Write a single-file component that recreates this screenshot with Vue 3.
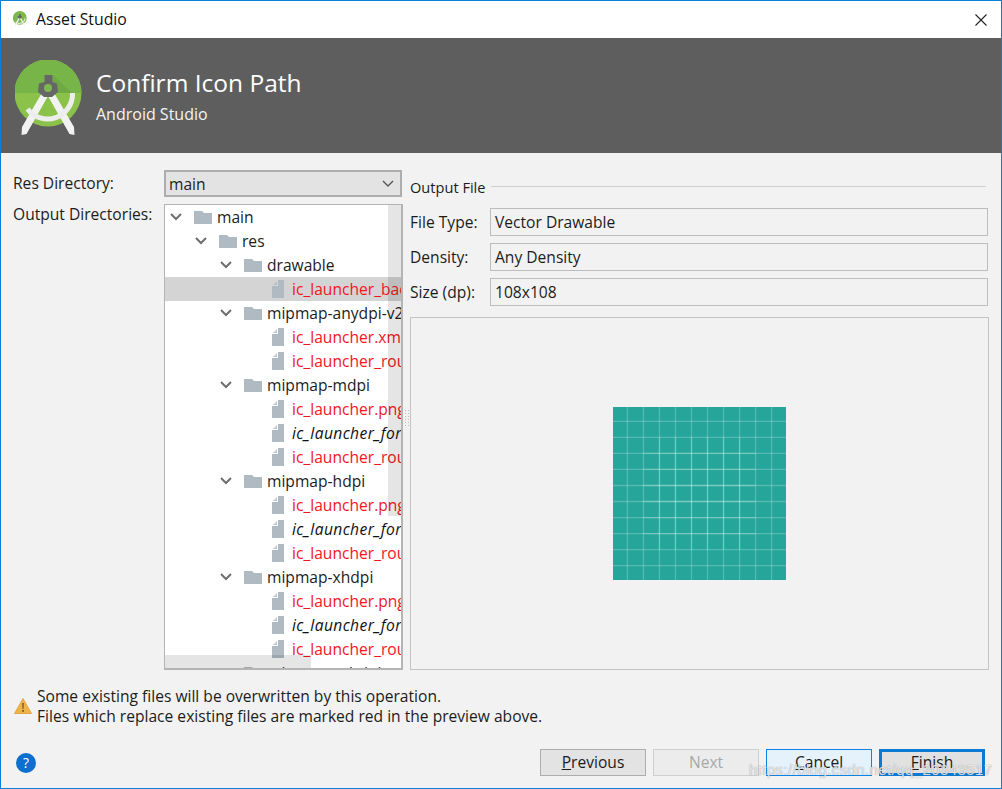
<script setup>
const rows = [
  { d: 0, t: 'folder', n: 'main' },
  { d: 1, t: 'folder', n: 'res' },
  { d: 2, t: 'folder', n: 'drawable' },
  { d: 3, t: 'file', n: 'ic_launcher_background.xml', c: 'red', sel: true },
  { d: 2, t: 'folder', n: 'mipmap-anydpi-v26' },
  { d: 3, t: 'file', n: 'ic_launcher.xml', c: 'red' },
  { d: 3, t: 'file', n: 'ic_launcher_round.xml', c: 'red' },
  { d: 2, t: 'folder', n: 'mipmap-mdpi' },
  { d: 3, t: 'file', n: 'ic_launcher.png', c: 'red' },
  { d: 3, t: 'file', n: 'ic_launcher_foreground.png', c: 'ital' },
  { d: 3, t: 'file', n: 'ic_launcher_round.png', c: 'red' },
  { d: 2, t: 'folder', n: 'mipmap-hdpi' },
  { d: 3, t: 'file', n: 'ic_launcher.png', c: 'red' },
  { d: 3, t: 'file', n: 'ic_launcher_foreground.png', c: 'ital' },
  { d: 3, t: 'file', n: 'ic_launcher_round.png', c: 'red' },
  { d: 2, t: 'folder', n: 'mipmap-xhdpi' },
  { d: 3, t: 'file', n: 'ic_launcher.png', c: 'red' },
  { d: 3, t: 'file', n: 'ic_launcher_foreground.png', c: 'ital' },
  { d: 3, t: 'file', n: 'ic_launcher_round.png', c: 'red' },
  { d: 2, t: 'folder', n: 'mipmap-xxhdpi' },
]
const fields = [
  { l: 'File Type:', v: 'Vector Drawable' },
  { l: 'Density:', v: 'Any Density' },
  { l: 'Size (dp):', v: '108x108' },
]
const lines = [9, 19, 29, 39, 49, 59, 69, 79, 89, 99]
const inner = [29, 39, 49, 59, 69, 79]
</script>

<template>
  <div class="win">
    <div class="title">
      <svg class="tlogo" viewBox="15 58 68 76">
        <circle cx="48" cy="91" r="33.500" fill="#7cb84b" />
        <path d="M42 90l6 4-22 39h-5zM54 90l-6 4 22 39h5z" fill="#f1f1f1" />
        <path d="M73 92a26 26 0 0 1-45 17" stroke="#eee" stroke-width="5" fill="none" />
        <path d="M44 73h9v7l5 3v6l-6 5h-8l-6-5v-6l6-3z" fill="#666" />
      </svg>
      <span class="ttext">Asset Studio</span>
      <svg class="close" viewBox="0 0 12 12"><path d="M.5.5l11 11M11.5.5l-11 11" stroke="#222" stroke-width="1.100" fill="none" /></svg>
    </div>

    <div class="head">
      <svg class="logo" viewBox="15 58 68 76">
        <circle cx="48" cy="91" r="33.500" fill="#8bc34a" />
        <path d="M14.500 91a33.500 33.500 0 0 1 67 0z" fill="#78b548" />
        <path d="M53 73l19 18H53z" fill="#6fa945" />
        <path d="M43 89l5 5-21.500 38-5 1 .5-8zM53 89l-5 5 21.500 38 5 1-.5-8z" fill="#f2f2f2" />
        <path d="M72.500 91a25 25 0 0 1-45 16" stroke="#ededed" stroke-width="5" fill="none" />
        <path d="M44.500 73h8v7l4.500 1.500 1 8.500-6 5h-8l-6-5 1-8.500 5.500-1.500z" fill="#666" />
        <circle cx="48" cy="86" r="4" fill="#7cb84b" />
      </svg>
      <div class="htext">
        <div class="h1">Confirm Icon Path</div>
        <div class="h2">Android Studio</div>
      </div>
    </div>

    <div class="body">
      <div class="left">
        <div class="lrow r1">
          <span class="lab">Res Directory:</span>
          <div class="combo">
            <span>main</span>
            <svg class="cchev" viewBox="0 0 12 7"><path d="M1 1l5 5 5-5" stroke="#555" stroke-width="1.400" fill="none" /></svg>
          </div>
        </div>
        <div class="lrow r2">
          <span class="lab lab2">Output Directories:</span>
          <div class="tree">
            <div v-for="(r, i) in rows" :key="i" class="row" :class="[`d${r.d}`, { sel: r.sel }]">
              <svg v-if="r.t === 'folder'" class="chev" viewBox="0 0 12 8"><path d="M1 1l5 5 5-5" stroke="#6e6e6e" stroke-width="2" fill="none" /></svg>
              <svg v-if="r.t === 'folder'" class="folder" viewBox="0 0 18 13"><path d="M0 0h8l2 2h8v11H0z" fill="#afbac2" /></svg>
              <svg v-else class="file" viewBox="0 0 12 18"><path d="M6 0h6v18H0V6h6z" fill="#afbac2" /><path d="M5 1v4H1z" fill="#afbac2" opacity=".75" /></svg>
              <span class="name" :class="r.c">{{ r.n }}</span>
            </div>
            <div class="vbar"></div>
            <div class="hbar"></div>
          </div>
          <div class="grip"></div>
        </div>
      </div>

      <div class="right">
        <div class="sect"><span>Output File</span><i></i></div>
        <div v-for="f in fields" :key="f.l" class="frow">
          <span class="flab">{{ f.l }}</span>
          <div class="fval">{{ f.v }}</div>
        </div>
        <div class="preview">
          <svg class="teal" viewBox="0 0 108 108">
            <rect width="108" height="108" fill="#26a69a" />
            <g stroke="#fff" stroke-opacity=".22" stroke-width=".8">
              <line v-for="n in lines" :key="'v' + n" :x1="n" :x2="n" y1="0" y2="108" />
              <line v-for="n in lines" :key="'h' + n" :y1="n" :y2="n" x1="0" x2="108" />
              <line v-for="n in inner" :key="'iv' + n" :x1="n" :x2="n" y1="19" y2="89" />
              <line v-for="n in inner" :key="'ih' + n" :y1="n" :y2="n" x1="19" x2="89" />
            </g>
          </svg>
        </div>
      </div>
    </div>

    <div class="warn">
      <svg class="wicon" viewBox="0 0 18 16">
        <path d="M9 .5L17.500 15.500H.5z" fill="#f0b24a" stroke="#e29a2e" stroke-width=".8" />
        <path d="M8.200 5h1.600l-.3 6h-1zM8.100 12h1.800v1.800H8.100z" fill="#6b5a2c" />
      </svg>
      <div class="wtext">
        <div>Some existing files will be overwritten by this operation.</div>
        <div>Files which replace existing files are marked red in the preview above.</div>
      </div>
    </div>

    <div class="foot">
      <div class="help">?</div>
      <div class="btns">
        <div class="btn"><u>P</u>revious</div>
        <div class="btn off">Next</div>
        <div class="btn hover"><u>C</u>ancel</div>
        <div class="btn def"><u>F</u>inish</div>
      </div>
    </div>
    <div class="mark">https://blog.csdn.net/qq_20343517</div>
  </div>
</template>

<style scoped>
.win {
  position: relative;
  width: 1002px;
  height: 789px;
  box-sizing: border-box;
  border: 1px solid #0a7fd8;
  background: #f2f2f2;
  display: flex;
  flex-direction: column;
  font-family: "Open Sans", "Noto Sans", sans-serif;
  font-size: 15.6px;
  color: #1c1c1c;
  overflow: hidden;
}
.title {
  height: 37px;
  flex: none;
  background: #fff;
  display: flex;
  align-items: center;
  padding-left: 12px;
}
.tlogo { width: 14px; height: 16px; margin-right: 9px; margin-top: -2px; }
.ttext { font-size: 15.8px; color: #111; margin-top: -2px; }
.close { width: 12px; height: 12px; margin-left: auto; margin-right: 14px; }
.head {
  height: 115px;
  flex: none;
  background: #5e5e5e;
  display: flex;
  align-items: center;
  padding-left: 14px;
  color: #fff;
}
.logo { width: 68px; height: 76px; margin-right: 13px; margin-top: 5px; }
.h1 { font-size: 24.5px; line-height: 30px; }
.h2 { font-size: 16px; line-height: 20px; margin-top: 6px; color: #f4f4f4; }
.body {
  flex: none;
  height: 517px;
  display: flex;
  padding: 17px 13px 0 12px;
  box-sizing: border-box;
}
.left { width: 390px; flex: none; }
.lrow { display: flex; position: relative; }
.lab { width: 151px; flex: none; line-height: 27px; }
.lab2 { line-height: 20px; }
.r1 { height: 27px; }
.r2 { margin-top: 7px; }
.combo {
  width: 238px;
  height: 27px;
  flex: none;
  box-sizing: border-box;
  border: 2px solid #adadad;
  background: #e3e3e3;
  display: flex;
  align-items: center;
  justify-content: space-between;
  padding: 0 5px 0 3px;
}
.cchev { width: 12px; height: 7px; margin-right: 1px; }
.tree {
  position: relative;
  width: 239px;
  height: 466px;
  flex: none;
  box-sizing: border-box;
  border: 1px solid #b4b4b4;
  border-width: 1px 2px 2px 1px;
  background: #fff;
  overflow: hidden;
}
.row {
  position: relative;
  height: 24px;
  display: flex;
  align-items: center;
  white-space: nowrap;
}
.row.sel { background: #d4d4d4; }
.chev { width: 12px; height: 8px; margin-right: 12px; flex: none; }
.folder { width: 18px; height: 13px; margin-right: 5px; flex: none; }
.file { width: 12px; height: 18px; margin-right: 8px; flex: none; }
.d0 { padding-left: 5px; }
.d1 { padding-left: 30px; }
.d2 { padding-left: 55px; }
.d3 { padding-left: 107px; }
.name { line-height: 24px; }
.red { color: #f5141e; }
.ital { font-style: italic; color: #111; letter-spacing: .4px; }
.vbar {
  position: absolute;
  right: 0;
  top: 0;
  width: 13px;
  height: 311px;
  background: rgba(0, 0, 0, .1);
}
.hbar {
  position: absolute;
  left: 0;
  bottom: 0;
  width: 146px;
  height: 13px;
  background: rgba(0, 0, 0, .1);
}
.grip {
  position: absolute;
  left: 391px;
  top: 205px;
  width: 5px;
  height: 18px;
  background-image: radial-gradient(circle, #bdbdbd 0.9px, transparent 1px);
  background-size: 3px 3px;
}
.right { flex: 1; padding-left: 7px; min-width: 0; }
.sect {
  height: 19px;
  display: flex;
  align-items: center;
  gap: 6px;
  margin-top: 7px;
  margin-bottom: 12px;
  padding-right: 2px;
  font-size: 14.6px;
}
.sect i { flex: 1; height: 1px; background: #cfcfcf; }
.frow { display: flex; height: 28px; margin-bottom: 7px; align-items: center; }
.flab { width: 80px; flex: none; }
.fval {
  flex: 1;
  height: 28px;
  box-sizing: border-box;
  border: 1px solid #bdbdbd;
  padding-left: 4px;
  line-height: 26px;
}
.preview {
  margin-top: 11px;
  margin-right: -1px;
  height: 353px;
  box-sizing: border-box;
  border: 1px solid #c4c4c4;
  display: flex;
  align-items: center;
  justify-content: center;
}
.teal { width: 173px; height: 173px; margin-right: 1px; display: block; }
.warn {
  flex: none;
  display: flex;
  align-items: center;
  height: 40px;
  margin-top: 16px;
  padding-left: 13px;
}
.wicon { width: 18px; height: 16px; margin-right: 5px; }
.wtext { line-height: 20px; }
.foot {
  flex: 1;
  display: flex;
  align-items: flex-start;
  padding: 23px 16px 0 15px;
}
.help {
  width: 20px;
  height: 20px;
  margin-top: 4px;
  border-radius: 50%;
  background: #0d6fce;
  color: #fff;
  text-align: center;
  line-height: 20px;
  font-size: 14px;
}
.btns { margin-left: auto; display: flex; gap: 7px; }
.btn {
  width: 106px;
  height: 27px;
  box-sizing: border-box;
  border: 1px solid #adadad;
  background: #e3e3e3;
  text-align: center;
  line-height: 25px;
}
.off { background: #ececec; border-color: #cfcfcf; color: #a8a8a8; }
.hover { background: #e5f1fb; border-color: #0a84e8; }
.def { border: 3px solid #0a7ad4; line-height: 21px; background: #e1e1e1; }
.mark {
  position: absolute;
  left: 748px;
  top: 760px;
  font-family: "Liberation Sans", sans-serif;
  font-size: 15px;
  color: rgba(255, 255, 255, .78);
  text-shadow: 0 0 1px rgba(100, 100, 100, .8);
  white-space: nowrap;
  letter-spacing: .4px;
}
</style>
